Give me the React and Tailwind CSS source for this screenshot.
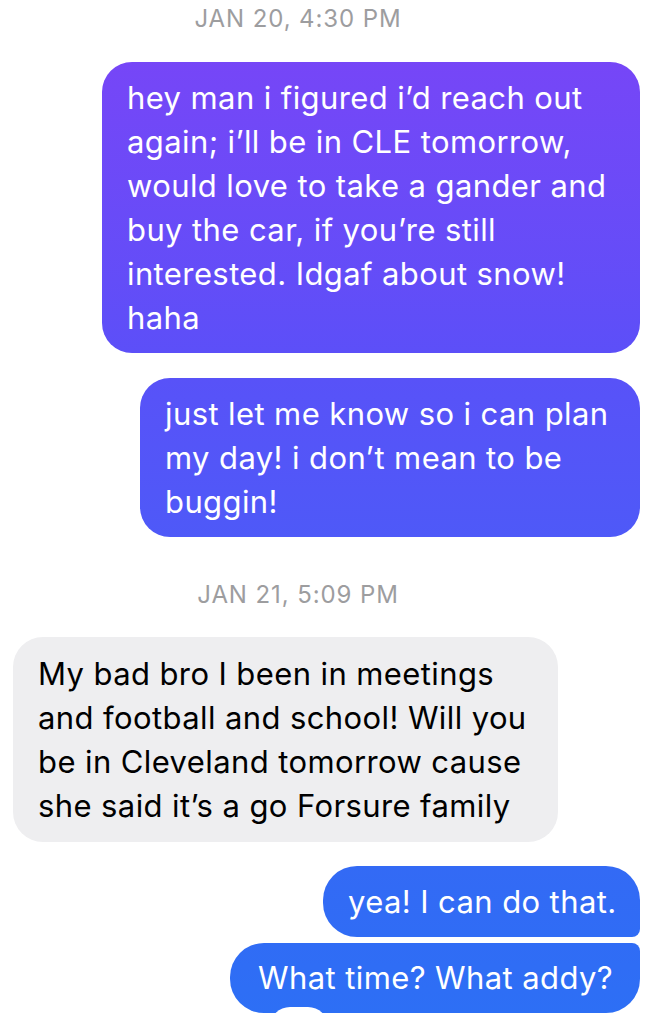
export default function App() {
  const font = "font-['Inter','Liberation_Sans',sans-serif]";
  const Line = ({ children }) => <span className="block whitespace-nowrap">{children}</span>;
  return (
    <div className={`relative w-[656px] h-[1024px] overflow-hidden bg-white ${font}`}>
      <div className="pt-[7px] pr-[60px] text-center text-[24px] leading-[23px] tracking-[0.9px] text-[#9d9d9f]">
        JAN 20, 4:30 PM
      </div>

      <div className="mt-[32px] flex flex-col items-end pr-[16px]">
        <div className="w-[538px] rounded-[30px] bg-linear-to-b from-[#7646f7] to-[#5c4ff8] px-[25px] py-[13.5px] text-[31px] leading-[44px] tracking-[0.4px] text-white">
          <Line>hey man i figured i’d reach out</Line>
          <Line>again; i’ll be in CLE tomorrow,</Line>
          <Line>would love to take a gander and</Line>
          <Line>buy the car, if you’re still</Line>
          <Line>interested. Idgaf about snow!</Line>
          <Line>haha</Line>
        </div>
        <div className="mt-[25px] w-[500px] rounded-[30px] bg-linear-to-b from-[#5852f8] to-[#4e59f8] px-[25px] py-[13.5px] text-[31px] leading-[44px] tracking-[0.4px] text-white">
          <Line>just let me know so i can plan</Line>
          <Line>my day! i don’t mean to be</Line>
          <Line>buggin!</Line>
        </div>
      </div>

      <div className="mt-[46px] pr-[60px] text-center text-[24px] leading-[23px] tracking-[0.9px] text-[#9d9d9f]">
        JAN 21, 5:09 PM
      </div>

      <div className="ml-[13px] mt-[31px] w-[545px] rounded-[30px] bg-[#eeeef0] px-[25px] py-[14.5px] text-[31px] leading-[44px] tracking-[0.4px] text-black">
        <Line>My bad bro I been in meetings</Line>
        <Line>and football and school! Will you</Line>
        <Line>be in Cleveland tomorrow cause</Line>
        <Line>she said it’s a go Forsure family</Line>
      </div>

      <div className="mt-[24px] flex flex-col items-end gap-[6px] pr-[16px]">
        <div className="w-[317px] rounded-[34px] rounded-br-[8px] bg-linear-to-b from-[#336af5] to-[#306cf5] pl-[25px] pr-[24px] py-[13.5px] text-right text-[31px] leading-[44px] tracking-[0.4px] text-white">
          <Line>yea! I can do that.</Line>
        </div>
        <div className="relative w-[410px] rounded-[34px] rounded-tr-[8px] bg-linear-to-b from-[#306cf5] to-[#2d6ff5] pl-[25px] pr-[27px] py-[13px] text-right text-[31px] leading-[44px] tracking-[0.4px] text-white">
          <Line>What time? What addy?</Line>
          <div className="absolute left-[40px] top-[64px] h-[40px] w-[58px] rounded-full bg-white" />
        </div>
      </div>
    </div>
  );
}
